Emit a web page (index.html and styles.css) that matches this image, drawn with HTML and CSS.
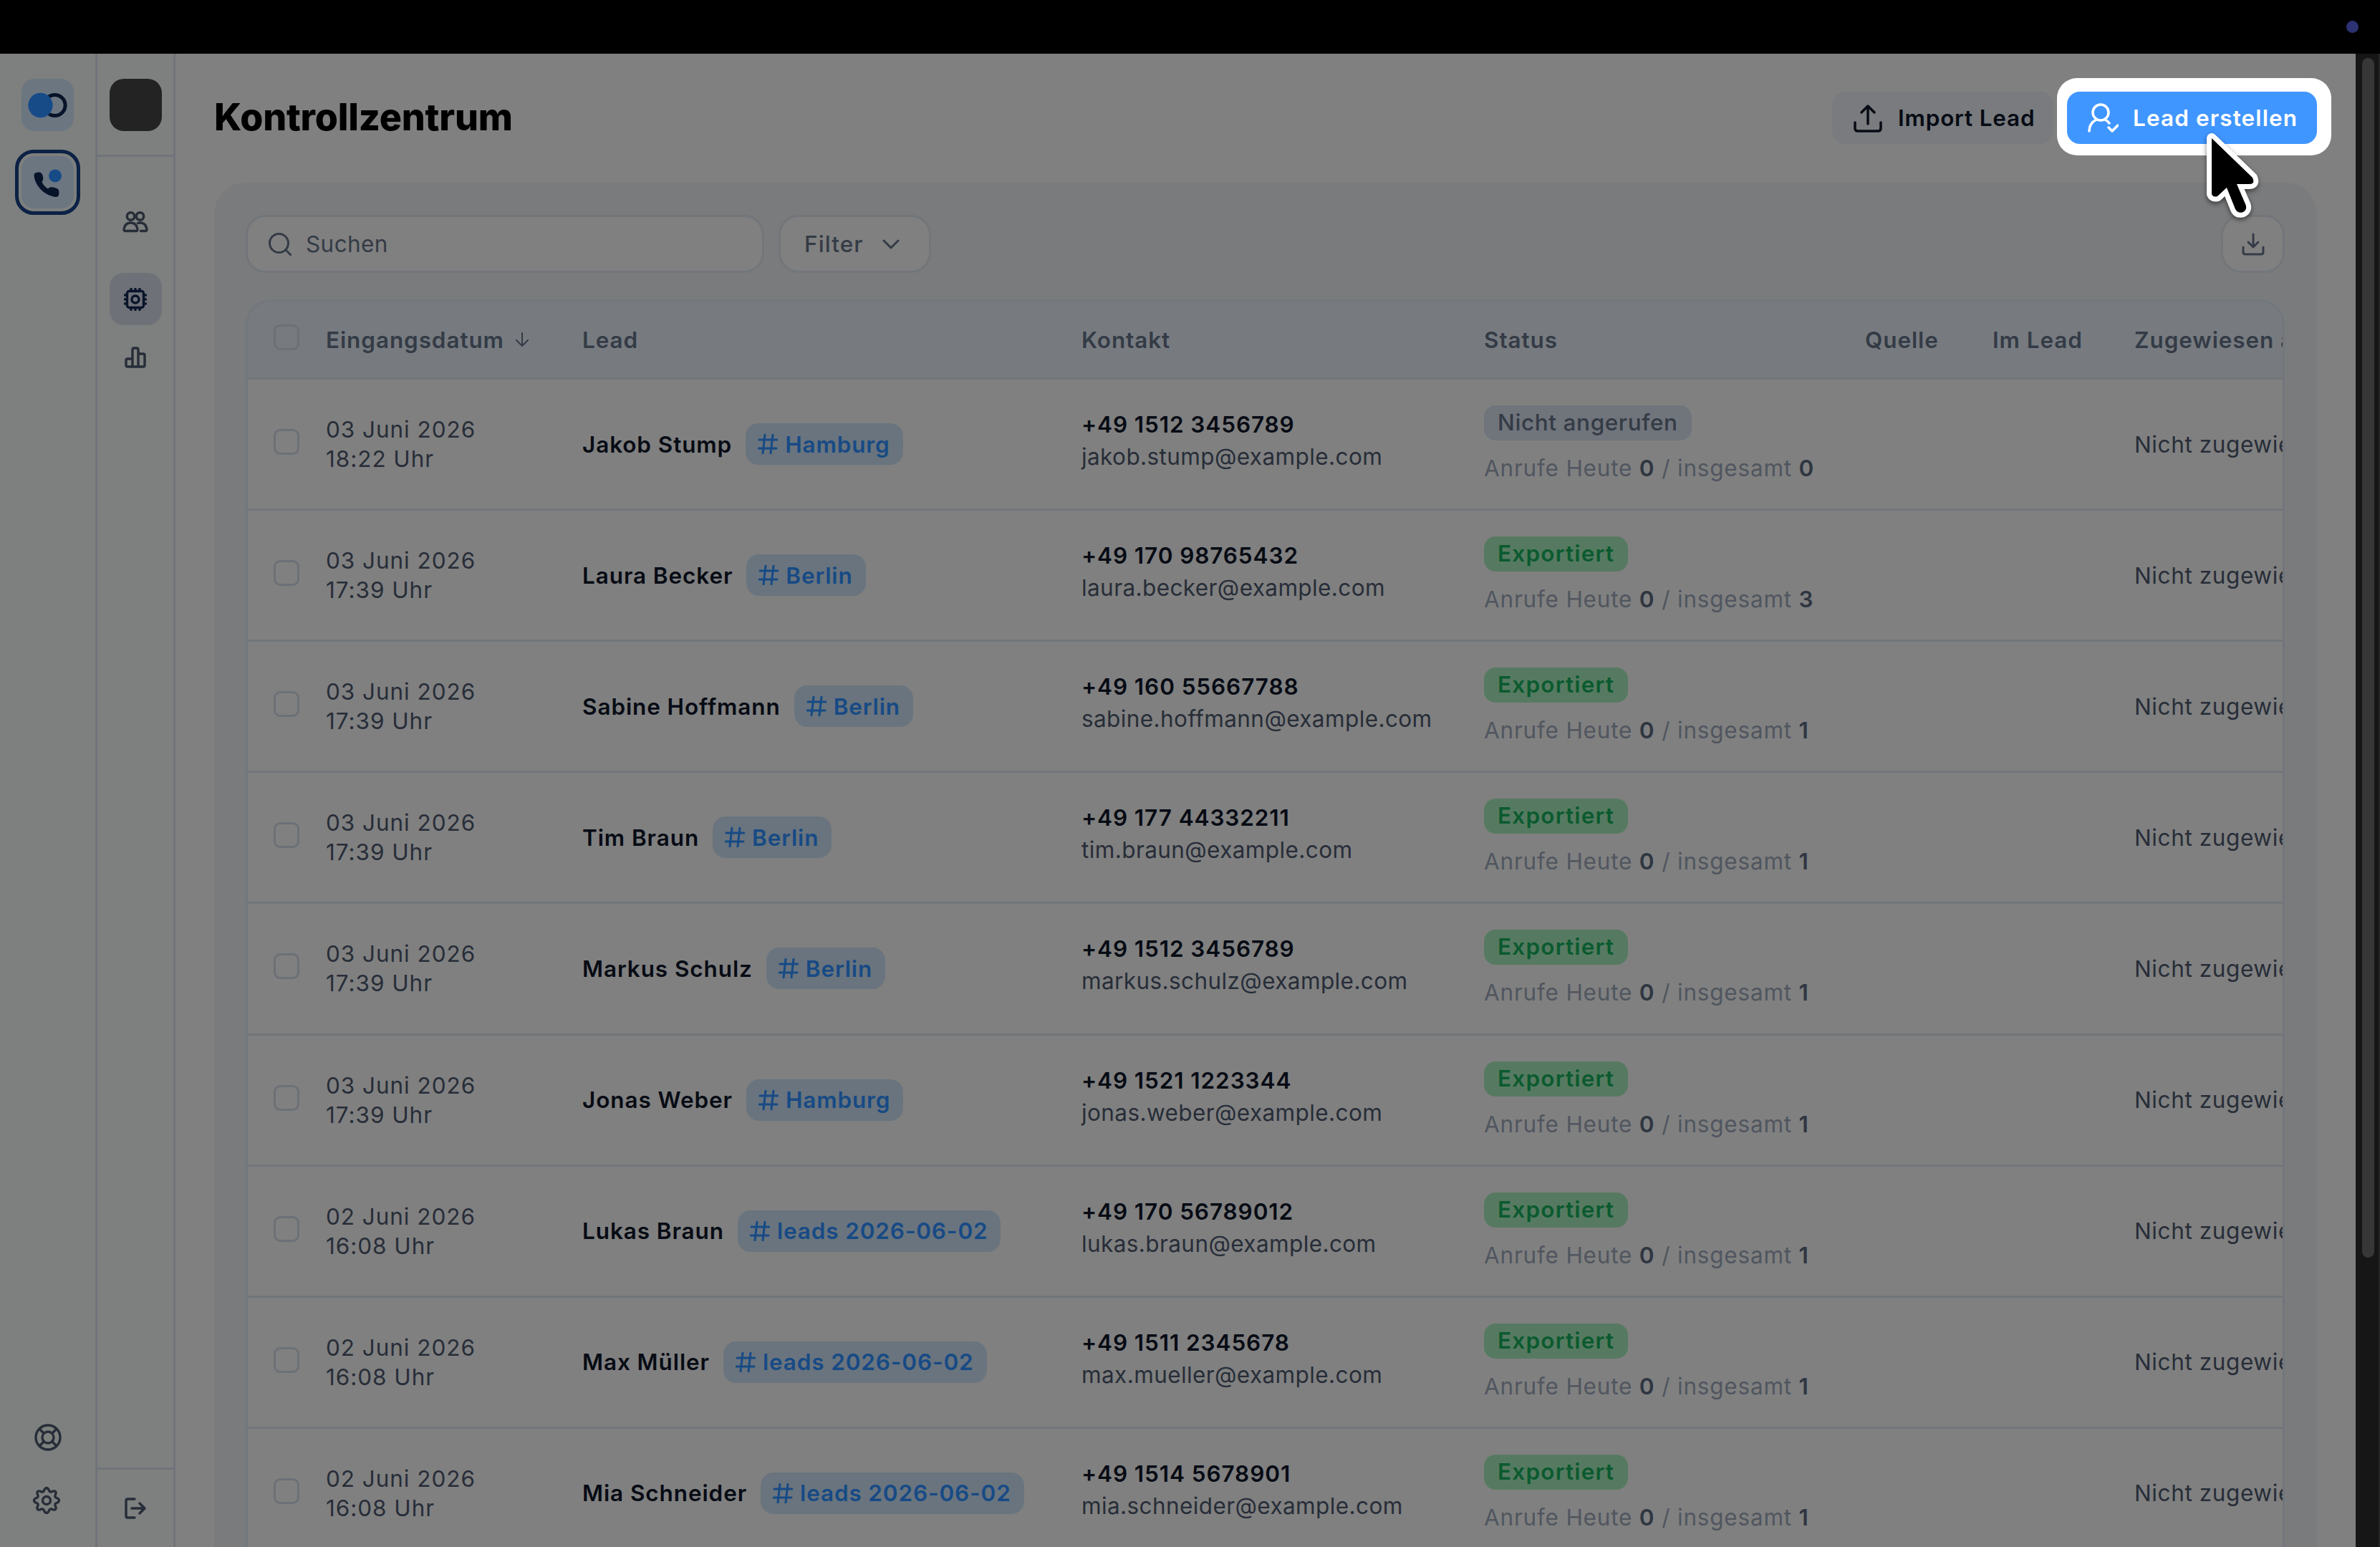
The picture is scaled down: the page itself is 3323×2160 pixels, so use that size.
FILE: index.html
```html
<!doctype html>
<html lang="de">
	<head>
		<meta charset="utf-8">
		<title>Kontrollzentrum</title>
		<link rel="stylesheet" href="styles.css">
	</head>
	<body>
		<div class="topbar"><span class="rec-dot"></span></div>
		<div class="app">
			<nav class="rail">
				<div class="tile logo">
					<svg width="56" height="36" viewBox="0 0 56 36"><circle cx="37.500" cy="18" r="14.600" fill="none" stroke="#071329" stroke-width="5"/><circle cx="17.500" cy="18" r="17.200" fill="#174b88"/></svg>
				</div>
				<div class="app-current">
					<div class="tile">
						<svg width="42" height="42" viewBox="0 0 42 42"><path d="M2 9Q3 6.500 8 6.500Q13 6 14 13Q15 17 12.500 20Q15 26 21 29.500Q24 26 30 28Q36 29 36.300 33V37Q36 41.500 31 41C16 39 2 25 1.500 10Z" fill="#071329"/><circle cx="31" cy="11.500" r="9" fill="#174b88"/></svg>
					</div>
				</div>
				<div class="rail-bottom">
					<svg class="icon" width="38" height="38" viewBox="0 0 38 38"><circle cx="19" cy="19" r="17"/><circle cx="19" cy="19" r="8"/><path d="M7 7l6 6M31 7l-6 6M7 31l6-6M31 31l-6-6"/></svg>
					<svg class="icon gear" width="40" height="40" viewBox="0 0 40 40"><path d="M20 2.500Q22.500 3 24 7Q25 8.500 27 8Q31 6 32.400 7.600Q34 9 32 13Q31.500 15 33 16Q37.500 17.500 37.500 20Q37.500 22.500 33 24Q31.500 25 32 27Q34 31 32.400 32.400Q31 34 27 32Q25 31.500 24 33Q22.500 37.500 20 37.500Q17.500 37.500 16 33Q15 31.500 13 32Q9 34 7.600 32.400Q6 31 8 27Q8.500 25 7 24Q2.500 22.500 2.500 20Q2.500 17.500 7 16Q8.500 15 8 13Q6 9 7.600 7.600Q9 6 13 8Q15 8.500 16 7Q17.500 3 20 2.500Z"/><circle cx="20" cy="20" r="5.500"/></svg>
				</div>
			</nav>
			<nav class="subnav">
				<div class="subnav-head"><div class="avatar"></div></div>
				<div class="subnav-list">
					<div class="nav-item">
						<svg class="icon" width="36" height="30" viewBox="0 0 36 30"><circle cx="11.500" cy="7" r="5.200"/><circle cx="24.500" cy="7" r="5.200"/><path d="M4 27.500Q2 27.500 2 25C3 19 6 16 11.500 16S20 19 21 25Q21 27.500 19 27.500ZM21.500 16.500C28 14.500 33 18 34 25Q34 27.500 32 27.500H25.500"/></svg>
					</div>
					<div class="nav-item on">
						<svg class="icon" width="32" height="32" viewBox="0 0 32 32"><rect x="4.500" y="4.500" width="23" height="23" rx="3"/><circle cx="16" cy="16" r="5"/><path d="M10 1.500v3M16 1.500v3M22 1.500v3M10 27.500v3M16 27.500v3M22 27.500v3M1.500 10h3M1.500 16h3M1.500 22h3M27.500 10h3M27.500 16h3M27.500 22h3"/></svg>
					</div>
					<div class="nav-item">
						<svg class="icon" width="30" height="30" viewBox="0 0 30 30"><path d="M11 28V4Q11 2 13 2H17Q19 2 19 4V28M2 26V19Q2 17 4 17H11M19 10H26Q28 10 28 12V26Q28 28 26 28H4Q2 28 2 26"/></svg>
					</div>
				</div>
				<div class="subnav-foot">
					<svg class="icon" width="30" height="30" viewBox="0 0 30 30"><path d="M14 2H4Q2 2 2 4V26Q2 28 4 28H14M10 15H28M21 8l7 7-7 7"/></svg>
				</div>
			</nav>
			<main class="main">
				<header class="page-head">
					<h1>Kontrollzentrum</h1>
					<button class="btn btn-import">
						<svg width="40" height="40" viewBox="0 0 40 40"><path d="M20 28V3M11 12l9-9 9 9M2 26V34Q2 38 6 38H34Q38 38 38 34V26"/></svg>
						<span>Import Lead</span>
					</button>
					<div class="spotlight">
						<button class="btn btn-create">
							<svg width="43" height="41" viewBox="0 0 43 41"><circle cx="18" cy="13" r="11"/><path d="M2 39C2 31 6 26 12 23M24 23Q28 25 30 28M29 34l5 5 8-8"/></svg>
							<span>Lead erstellen</span>
						</button>
						<svg class="cursor" width="100" height="140" viewBox="0 0 100 140"><path class="cursor-edge" d="M21 19L78 74Q82 83 74 83H56L68.500 112Q71 119 64 122.500Q57 124 54 118L42 88L29 100Q23 102 21 97Z"/><path d="M21 19L78 74Q82 83 74 83H56L68.500 112Q71 119 64 122.500Q57 124 54 118L42 88L29 100Q23 102 21 97Z"/></svg>
					</div>
				</header>
				<section class="panel">
					<div class="toolbar">
						<div class="search">
							<svg class="icon" width="32" height="32" viewBox="0 0 32 32"><circle cx="14.500" cy="14.500" r="13"/><path d="M24 24l7 7"/></svg>
							<span>Suchen</span>
						</div>
						<div class="filter">
							<span>Filter</span>
							<svg class="icon" width="24" height="16" viewBox="0 0 24 16"><path d="M2 3l10 10L22 3"/></svg>
						</div>
						<div class="download">
							<svg class="icon" width="32" height="32" viewBox="0 0 32 32"><path d="M16 2V20M9 13l7 7 7-7M2 20V27Q2 30 5 30H27Q30 30 30 27V20"/></svg>
						</div>
					</div>
					<div class="table">
						<div class="row head">
							<div><i class="check"></i></div>
							<div class="sort">Eingangsdatum <svg width="20" height="20" viewBox="0 0 20 20"><path d="M10 1V19M2 11l8 8 8-8"/></svg></div>
							<div>Lead</div>
							<div>Kontakt</div>
							<div>Status</div>
							<div>Quelle</div>
							<div>Im Lead</div>
							<div>Zugewiesen an</div>
						</div>
						<div id="rows"></div>
					</div>
				</section>
			</main>
			<div class="scrollbar"><div class="thumb"></div></div>
		</div>
		<script>
			// date, time, name, tag, phone, mail, calls total
			var leads = [
				["03 Juni 2026", "18:22", "Jakob Stump", "Hamburg", "+49 1512 3456789", "jakob.stump@example.com", 0],
				["03 Juni 2026", "17:39", "Laura Becker", "Berlin", "+49 170 98765432", "laura.becker@example.com", 3],
				["03 Juni 2026", "17:39", "Sabine Hoffmann", "Berlin", "+49 160 55667788", "sabine.hoffmann@example.com", 1],
				["03 Juni 2026", "17:39", "Tim Braun", "Berlin", "+49 177 44332211", "tim.braun@example.com", 1],
				["03 Juni 2026", "17:39", "Markus Schulz", "Berlin", "+49 1512 3456789", "markus.schulz@example.com", 1],
				["03 Juni 2026", "17:39", "Jonas Weber", "Hamburg", "+49 1521 1223344", "jonas.weber@example.com", 1],
				["02 Juni 2026", "16:08", "Lukas Braun", "leads 2026-06-02", "+49 170 56789012", "lukas.braun@example.com", 1],
				["02 Juni 2026", "16:08", "Max Müller", "leads 2026-06-02", "+49 1511 2345678", "max.mueller@example.com", 1],
				["02 Juni 2026", "16:08", "Mia Schneider", "leads 2026-06-02", "+49 1514 5678901", "mia.schneider@example.com", 1]
			];
			var hash = '<svg width="28" height="28" viewBox="0 0 28 28"><path d="M10 1L7 27M21 1L18 27M2 8H27M1 20H26"/></svg>';
			var html = "";
			for (var i = 0; i < leads.length; i++) {
				var l = leads[i];
				var badge = l[6] == 0 ? '<span class="badge">Nicht angerufen</span>' : '<span class="badge done">Exportiert</span>';
				html += '<div class="row">' +
					'<div><i class="check"></i></div>' +
					'<div class="date">' + l[0] + '<br>' + l[1] + ' Uhr</div>' +
					'<div class="lead"><b>' + l[2] + '</b><span class="tag">' + hash + '<span>' + l[3] + '</span></span></div>' +
					'<div class="contact"><b>' + l[4] + '</b><span>' + l[5] + '</span></div>' +
					'<div class="status">' + badge + '<p>Anrufe Heute <b>0</b> / insgesamt <b>' + l[6] + '</b></p></div>' +
					'<div></div><div></div>' +
					'<div class="owner">Nicht zugewiesen</div>' +
				'</div>';
			}
			document.getElementById("rows").innerHTML = html;
		</script>
	</body>
</html>
```
FILE: styles.css
```css
* {
	box-sizing: border-box;
	margin: 0;
	padding: 0;
}
body {
	height: 2160px;
	overflow: hidden;
	background: #000;
	color: #272d38;
	font-family: Inter, "Liberation Sans", sans-serif;
	font-size: 31.5px;
	line-height: 41px;
	letter-spacing: 0.6px;
	white-space: nowrap;
}
svg {
	display: block;
	flex: none;
	fill: none;
	stroke: currentColor;
	stroke-width: 3;
	stroke-linecap: round;
	stroke-linejoin: round;
}
b {
	font-weight: 600;
	letter-spacing: 0.9px;
}
.topbar {
	display: flex;
	justify-content: flex-end;
	align-items: center;
	height: 75px;
	padding-right: 30px;
}
.rec-dot {
	width: 17px;
	height: 17px;
	border-radius: 50%;
	background: #2d3272;
}
.app {
	display: flex;
	height: 2085px;
	background: #808080;
}

/* left rails */
.rail, .subnav {
	display: flex;
	flex-direction: column;
	flex: none;
	background: #7d807e;
	border-right: 3px solid #707379;
}
.rail {
	align-items: center;
	width: 136px;
	padding: 35px 0 45px;
}
.tile {
	display: flex;
	align-items: center;
	justify-content: center;
	width: 73px;
	height: 73px;
	border-radius: 18px;
	background: #6c7681;
}
.tile svg {
	stroke: none;
}
.app-current {
	margin-top: 26px;
	padding: 4px;
	border: 5px solid #0c2145;
	border-radius: 26px;
}
.rail-bottom {
	display: flex;
	flex-direction: column;
	align-items: center;
	gap: 49px;
	margin-top: auto;
}
.rail-bottom .gear {
	margin-right: 4px;
}
.subnav {
	width: 109px;
}
.subnav-head {
	display: flex;
	justify-content: center;
	height: 144px;
	padding-top: 35px;
	border-bottom: 3px solid #707379;
}
.avatar {
	width: 73px;
	height: 73px;
	border-radius: 20px;
	background: #232323;
}
.subnav-list {
	display: flex;
	flex-direction: column;
	align-items: center;
	padding-top: 54px;
}
.nav-item {
	display: flex;
	align-items: center;
	justify-content: center;
	width: 73px;
	height: 73px;
	border-radius: 20px;
}
.nav-item.on {
	margin: 35px 0 8px;
	background: #6e7178;
}
.subnav-foot {
	display: flex;
	justify-content: center;
	align-items: center;
	height: 111px;
	margin-top: auto;
	border-top: 3px solid #707379;
}

/* page */
.main {
	display: flex;
	flex-direction: column;
	flex: 1;
	min-width: 0;
	padding: 0 54px;
}
.page-head {
	display: flex;
	align-items: center;
	height: 180px;
	padding-bottom: 1px;
}
h1 {
	margin-right: auto;
	padding-bottom: 2px;
	color: #000;
	font-size: 52px;
	font-weight: 800;
	line-height: 60px;
	letter-spacing: -0.2px;
}
.btn {
	display: flex;
	align-items: center;
	height: 73px;
	border: 0;
	border-radius: 18px;
	font: inherit;
	font-weight: 600;
	letter-spacing: 0.8px;
}
.btn-import {
	width: 309px;
	gap: 22px;
	padding-left: 30px;
	background: #797b7e;
	color: #070b14;
}
.btn-import svg, .btn-create svg {
	stroke-width: 3.5;
}
.btn-create {
	width: 349px;
	gap: 20px;
	padding-left: 29px;
	background: #4096ff;
	color: #fff;
	letter-spacing: 1.1px;
}
.spotlight {
	position: relative;
	margin: -19px -20px -16px 5px;
	padding: 19px 20px 16px 14px;
	border-radius: 28px;
	background: #fff;
}
.cursor {
	position: absolute;
	left: 195px;
	top: 65px;
	stroke: none;
	fill: #000;
}
.cursor-edge {
	fill: #fff;
	stroke: #fff;
	stroke-width: 14;
	filter: drop-shadow(0 3px 3px rgba(0, 0, 0, 0.5));
}
.panel {
	flex: 1;
	min-height: 0;
	padding: 45px 45px 0 44px;
	border-radius: 44px 44px 0 0;
	background: #7a7b7d;
}
.toolbar {
	display: flex;
	gap: 20px;
	height: 81px;
	margin-bottom: 37px;
	color: #343b46;
}
.search, .filter, .download {
	display: flex;
	align-items: center;
	border: 3px solid #72767a;
	border-radius: 28px;
	background: #808080;
}
.search {
	width: 724px;
	gap: 20px;
	padding-left: 29px;
	letter-spacing: 0.4px;
}
.filter {
	width: 213px;
	gap: 26px;
	padding-left: 33px;
	font-weight: 500;
	letter-spacing: 1.1px;
}
.download {
	justify-content: center;
	width: 89px;
	margin-left: auto;
}

/* table */
.table {
	height: 1800px;
	overflow: hidden;
	border: 3px solid #72777c;
	border-radius: 36px 36px 0 0;
	background: #808080;
}
.row {
	display: grid;
	grid-template-columns: 73px 358px 697px 562px 532px 178px 198px 400px;
	align-items: center;
	height: 183.12px;
	padding-left: 36px;
	border-bottom: 3px solid #72767a;
}
.row.head {
	height: 109px;
	background: #777b80;
	color: #343b46;
	font-weight: 600;
	letter-spacing: 0.9px;
}
.check {
	display: block;
	width: 36px;
	height: 36px;
	margin-bottom: 6px;
	border: 3px solid #6c7077;
	border-radius: 9px;
}
.date {
	letter-spacing: 0.95px;
}
.sort {
	display: flex;
	align-items: center;
	gap: 15px;
}
.sort svg {
	stroke-width: 2;
}
.lead {
	display: flex;
	align-items: center;
	gap: 19px;
	color: #070b14;
}
.tag {
	display: flex;
	align-items: center;
	gap: 10px;
	height: 58px;
	padding: 0 18px 0 17px;
	border-radius: 18px;
	background: #69747e;
	color: #174a85;
	font-weight: 600;
	letter-spacing: 0.85px;
}
.contact {
	display: flex;
	flex-direction: column;
	padding-bottom: 10px;
	line-height: 45px;
	letter-spacing: 0.4px;
}
.contact b {
	color: #070b14;
}
.badge {
	display: inline-block;
	height: 49px;
	padding: 0 19px;
	border-radius: 16px;
	background: #70747b;
	color: #343b46;
	font-weight: 500;
	line-height: 48px;
	vertical-align: top;
}
.badge.done {
	background: #567a61;
	color: #0b5a2f;
	font-weight: 600;
	letter-spacing: 1.2px;
}
.status p {
	margin-top: 18px;
	color: #50565f;
	letter-spacing: 0.8px;
}
.status b {
	color: #2f3641;
}

.scrollbar {
	width: 34px;
	padding: 6px 6px 0 9px;
	border-right: 2px solid #262626;
	background: #161616;
}
.thumb {
	height: 1675px;
	border-radius: 10px;
	background: #373737;
}
.icon {
	color: #272d38;
	stroke-width: 3.4;
}
.nav-item.on .icon {
	color: #0a152b;
}
.toolbar .icon {
	color: #343b46;
	stroke-width: 3;
}
```
